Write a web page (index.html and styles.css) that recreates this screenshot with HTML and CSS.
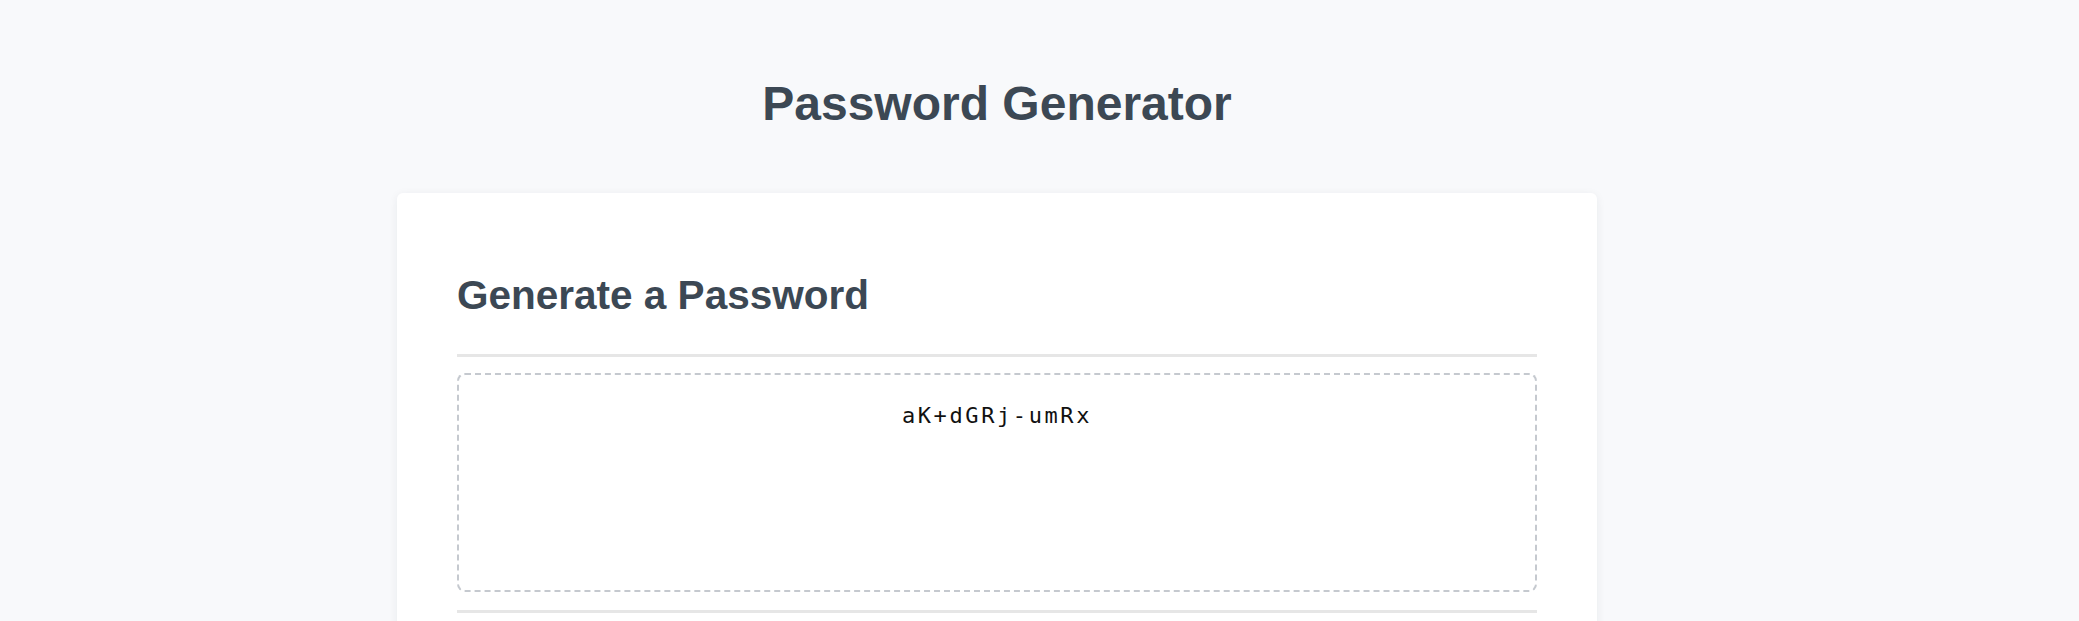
FILE: index.html
```html
<!DOCTYPE html>
<html lang="en">
<head>
<meta charset="utf-8">
<title>Password Generator</title>
<link rel="stylesheet" href="styles.css">
</head>
<body>
<div class="page">
  <h1 class="title">Password Generator</h1>
  <div class="card">
    <h2 class="card-title">Generate a Password</h2>
    <div class="rule"></div>
    <div class="output">
      <span class="password">aK+dGRj-umRx</span>
    </div>
    <div class="rule rule-bottom"></div>
  </div>
</div>
</body>
</html>
```

FILE: styles.css
```css
html, body {
  margin: 0;
  padding: 0;
  background: #f8f9fb;
  font-family: "Liberation Sans", Arial, sans-serif;
  color: #3c4854;
}

.page {
  width: 1994px;
  display: flex;
  flex-direction: column;
  align-items: center;
}

.title {
  margin: 76px 0 62px;
  font-size: 48px;
  font-weight: bold;
  line-height: normal;
  color: #3c4854;
  text-align: center;
}

.card {
  box-sizing: border-box;
  width: 1200px;
  background: #ffffff;
  border-radius: 6px;
  box-shadow: 0 2px 10px rgba(30, 40, 60, 0.07);
  padding: 79px 60px 40px;
}

.card-title {
  margin: 0 0 35px;
  font-size: 40.5px;
  font-weight: bold;
  line-height: normal;
  color: #3c4854;
}

.rule {
  height: 3px;
  background: #e6e6e6;
  margin-bottom: 16px;
}

.rule-bottom {
  margin-top: 18px;
  margin-bottom: 0;
}

.output {
  box-sizing: border-box;
  height: 219px;
  border: 2px dashed #c5c9cf;
  border-radius: 8px;
  padding-top: 25px;
  text-align: center;
}

.password {
  font-family: "DejaVu Sans Mono", "Liberation Mono", monospace;
  font-size: 22px;
  line-height: 31.5px;
  letter-spacing: 2.6px;
  color: #111111;
}
```
